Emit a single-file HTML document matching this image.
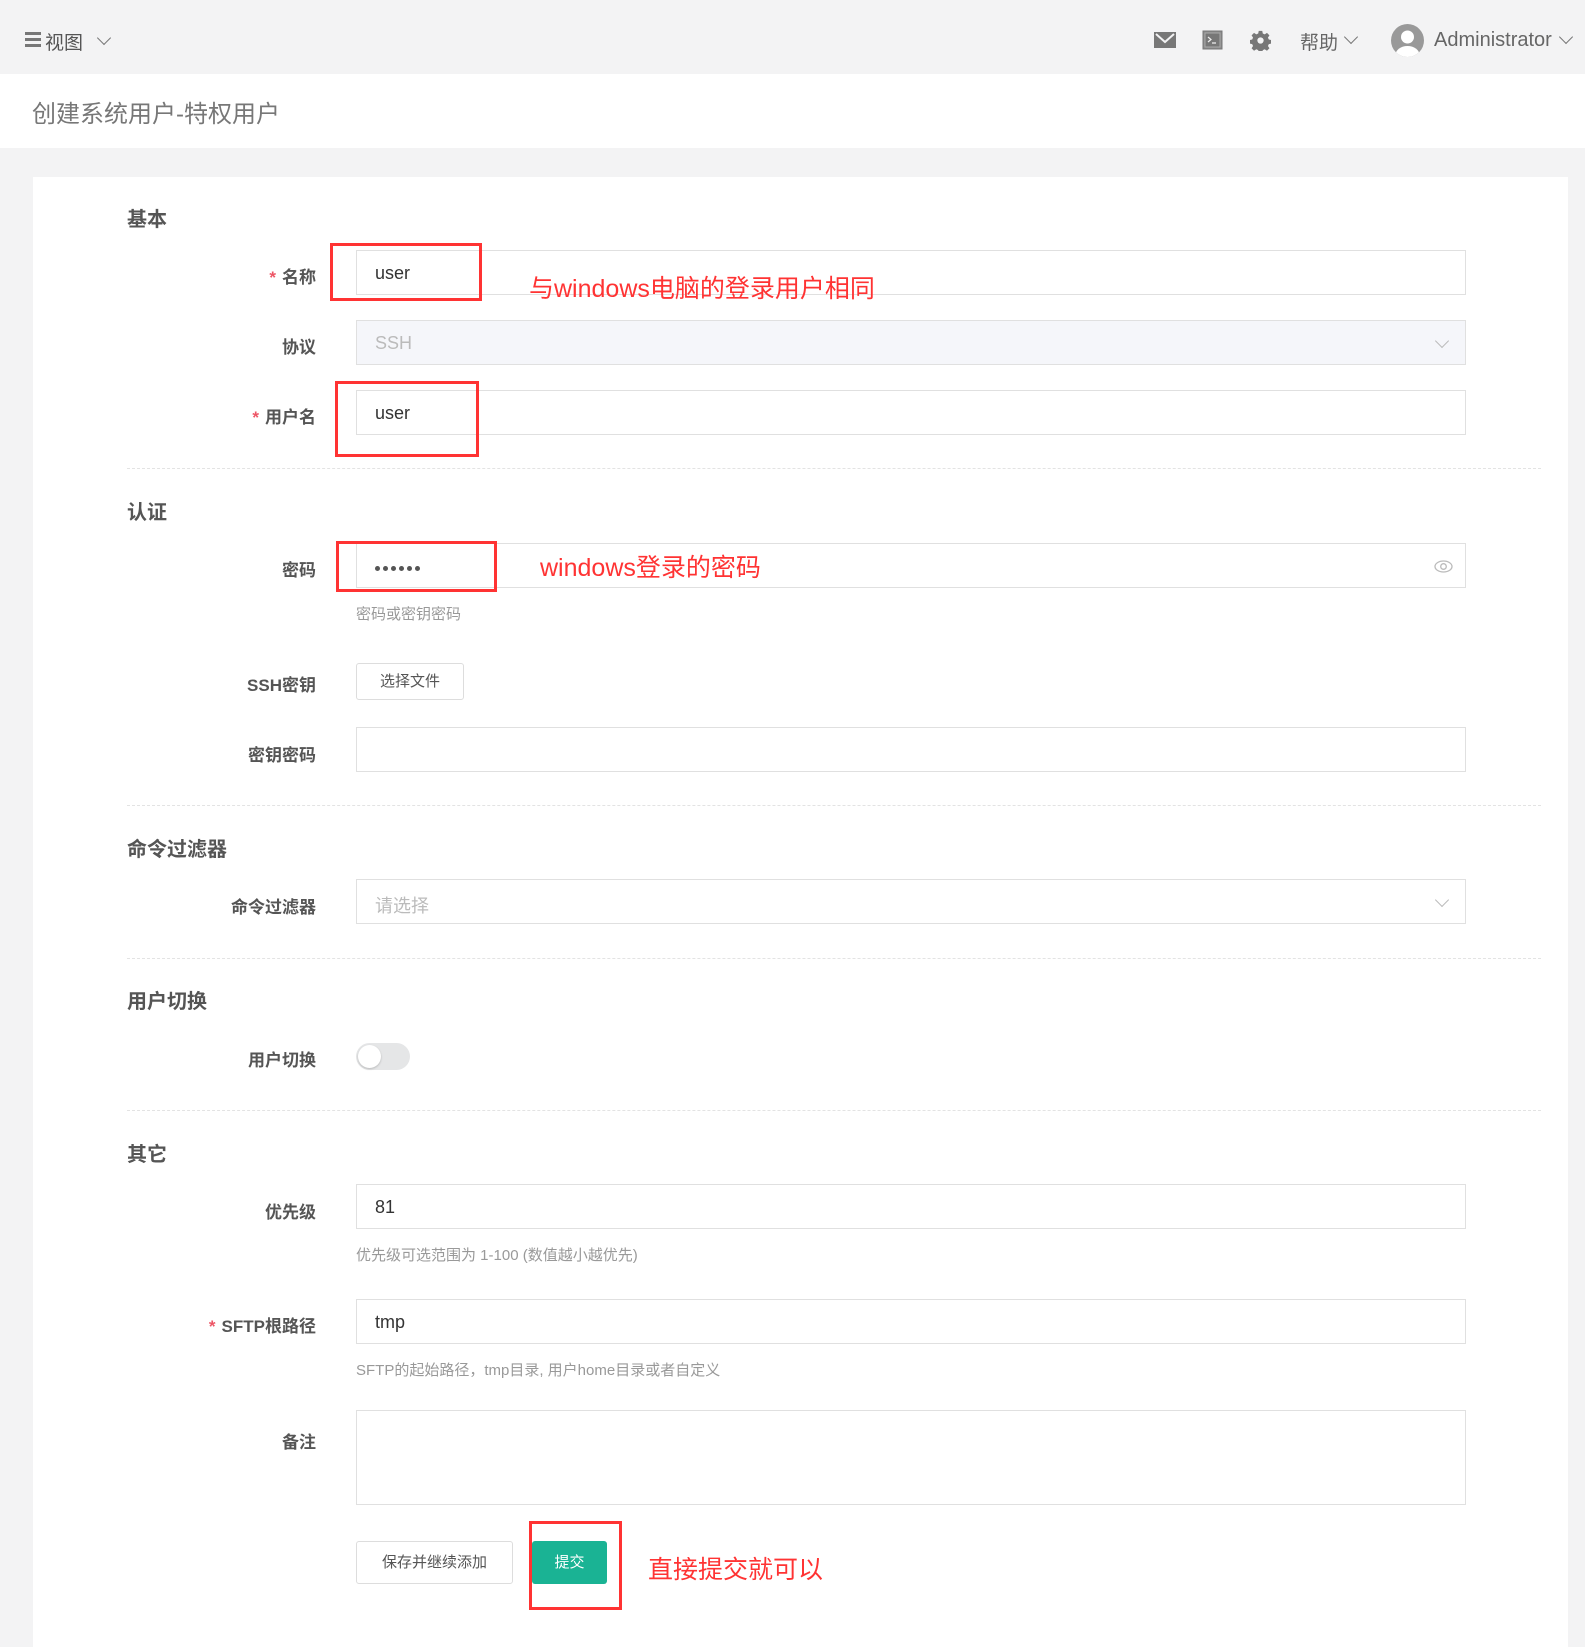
<!DOCTYPE html>
<html><head><meta charset="utf-8"><style>
*{box-sizing:border-box;margin:0;padding:0}
body{width:1585px;height:1631px;background:#f3f3f4;font-family:"Liberation Sans","Noto Sans CJK SC",sans-serif;color:#676a6c;position:relative;overflow:hidden}
.a{position:absolute}
.top{left:0;top:0;width:1585px;height:74px;background:#f3f3f4}
.hdr{left:0;top:74px;width:1585px;height:74px;background:#fff}
.card{left:33px;top:177px;width:1535px;height:1470px;background:#fff}
.sec{font-weight:bold;font-size:20px;color:#555;left:127px}
.lbl{font-weight:bold;font-size:17px;color:#555;right:1269px;text-align:right;white-space:nowrap}
.lbl b{color:#ed5565;margin-right:6px}
.inp{left:356px;width:1110px;height:45px;border:1px solid #e0e0e0;background:#fff;font-size:18px;color:#333;padding:12px 18px 0}
.hint{left:356px;font-size:15px;color:#999}
.dash{left:127px;width:1414px;border-top:1px dashed #e3e3e3;height:0}
.red{border:3px solid #f33;}
.rt{color:#f33;font-size:25px;white-space:nowrap}
.chev{width:10px;height:10px;border-right:1.5px solid #aaa;border-bottom:1.5px solid #aaa;transform:rotate(45deg)}
.dot{display:inline-block;width:5px;height:5px;border-radius:50%;background:#555;margin-right:3px}
</style></head><body>
<div class="a top"></div>
<div class="a" style="left:25px;top:32px;width:16px;height:3px;background:#777;box-shadow:0 6px 0 #777,0 12px 0 #777"></div>
<div class="a" style="left:45px;top:28px;font-size:19px;color:#555">视图</div>
<div class="a chev" style="left:99px;top:33px;border-color:#777"></div>
<svg class="a" style="left:1154px;top:32px" width="22" height="16"><rect width="22" height="16" fill="#777"/><path d="M2 2 L11 10 L20 2" stroke="#f3f3f4" stroke-width="2" fill="none"/></svg>
<svg class="a" style="left:1202px;top:30px" width="21" height="20"><rect x="1" y="1" width="19" height="18" fill="#888" stroke="#777" stroke-width="1"/><rect x="3" y="3" width="15" height="14" fill="#777" stroke="#aaa"/><path d="M6 7 L9 9.5 L6 12 M10 13 H14" stroke="#eee" stroke-width="1.2" fill="none"/></svg>
<svg class="a" style="left:1250px;top:30px" width="21" height="21" viewBox="0 0 24 24"><path fill="#777" d="M10 1h4l.6 3 2.2 1 2.6-1.7 2.8 2.8-1.7 2.6 1 2.2 3 .6v4l-3 .6-1 2.2 1.7 2.6-2.8 2.8-2.6-1.7-2.2 1-.6 3h-4l-.6-3-2.2-1-2.6 1.7-2.8-2.8 1.7-2.6-1-2.2-3-.6v-4l3-.6 1-2.2-1.7-2.6 2.8-2.8 2.6 1.7 2.2-1z"/><circle cx="12" cy="12" r="3.6" fill="#f3f3f4"/></svg>
<div class="a" style="left:1300px;top:28px;font-size:19px;color:#666">帮助</div>
<div class="a chev" style="left:1346px;top:32px;border-color:#777"></div>
<svg class="a" style="left:1391px;top:24px" width="33" height="33"><defs><clipPath id="c"><circle cx="16.5" cy="16.5" r="16.5"/></clipPath></defs><circle cx="16.5" cy="16.5" r="16.5" fill="#999"/><g clip-path="url(#c)"><circle cx="16.5" cy="13" r="6.5" fill="#fff"/><ellipse cx="16.5" cy="31" rx="12" ry="9" fill="#fff"/></g></svg>
<div class="a" style="left:1434px;top:29px;font-size:20px;color:#666">Administrator</div>
<div class="a chev" style="left:1561px;top:32px;border-color:#777"></div>
<div class="a hdr"></div>
<div class="a" style="left:32px;top:94px;font-size:24px;color:#777">创建系统用户-特权用户</div>
<div class="a card"></div>

<div class="a sec" style="top:203px">基本</div>
<div class="a lbl" style="top:263px"><b>*</b>名称</div>
<div class="a inp" style="top:250px">user</div>
<div class="a lbl" style="top:333px">协议</div>
<div class="a inp" style="top:320px;background:#f5f6fa;color:#bbb">SSH</div>
<div class="a chev" style="left:1437px;top:336px;border-color:#bbb"></div>
<div class="a lbl" style="top:403px"><b>*</b>用户名</div>
<div class="a inp" style="top:390px">user</div>
<div class="a dash" style="top:468px"></div>

<div class="a sec" style="top:496px">认证</div>
<div class="a lbl" style="top:556px">密码</div>
<div class="a inp" style="top:543px;padding:19px 18px 0;line-height:5px"><span class="dot"></span><span class="dot"></span><span class="dot"></span><span class="dot"></span><span class="dot"></span><span class="dot"></span></div>
<svg class="a" style="left:1434px;top:560px" width="19" height="13"><ellipse cx="9.5" cy="6.5" rx="8.5" ry="5.5" fill="none" stroke="#bbb" stroke-width="1.3"/><circle cx="9.5" cy="6.5" r="2.8" fill="none" stroke="#bbb" stroke-width="1.3"/></svg>
<div class="a hint" style="top:603px">密码或密钥密码</div>
<div class="a lbl" style="top:671px">SSH密钥</div>
<div class="a" style="left:356px;top:663px;width:108px;height:37px;border:1px solid #ddd;border-radius:3px;font-size:15px;color:#555;text-align:center;line-height:35px">选择文件</div>
<div class="a lbl" style="top:741px">密钥密码</div>
<div class="a inp" style="top:727px"></div>
<div class="a dash" style="top:805px"></div>

<div class="a sec" style="top:833px">命令过滤器</div>
<div class="a lbl" style="top:893px">命令过滤器</div>
<div class="a inp" style="top:879px;color:#bbb">请选择</div>
<div class="a chev" style="left:1437px;top:895px;border-color:#bbb"></div>
<div class="a dash" style="top:958px"></div>

<div class="a sec" style="top:985px">用户切换</div>
<div class="a lbl" style="top:1046px">用户切换</div>
<div class="a" style="left:356px;top:1043px;width:54px;height:27px;border-radius:14px;background:#e5e6e7"><div class="a" style="left:2px;top:2px;width:23px;height:23px;border-radius:50%;background:#fff;box-shadow:0 1px 2px rgba(0,0,0,.2)"></div></div>
<div class="a dash" style="top:1110px"></div>

<div class="a sec" style="top:1138px">其它</div>
<div class="a lbl" style="top:1198px">优先级</div>
<div class="a inp" style="top:1184px">81</div>
<div class="a hint" style="top:1244px">优先级可选范围为 1-100 (数值越小越优先)</div>
<div class="a lbl" style="top:1312px"><b>*</b>SFTP根路径</div>
<div class="a inp" style="top:1299px">tmp</div>
<div class="a hint" style="top:1359px">SFTP的起始路径，tmp目录, 用户home目录或者自定义</div>
<div class="a lbl" style="top:1428px">备注</div>
<div class="a inp" style="top:1410px;height:95px"></div>
<div class="a" style="left:356px;top:1541px;width:157px;height:43px;border:1px solid #ddd;border-radius:3px;font-size:15px;color:#555;text-align:center;line-height:41px">保存并继续添加</div>
<div class="a" style="left:532px;top:1541px;width:75px;height:43px;background:#1ab394;border-radius:3px;font-size:15px;color:#fff;text-align:center;line-height:43px">提交</div>

<div class="a red" style="left:330px;top:243px;width:152px;height:58px"></div>
<div class="a rt" style="left:529px;top:269px">与windows电脑的登录用户相同</div>
<div class="a red" style="left:335px;top:381px;width:144px;height:76px"></div>
<div class="a red" style="left:336px;top:541px;width:161px;height:51px"></div>
<div class="a rt" style="left:540px;top:548px">windows登录的密码</div>
<div class="a red" style="left:529px;top:1521px;width:93px;height:89px"></div>
<div class="a rt" style="left:648px;top:1550px">直接提交就可以</div>
</body></html>
